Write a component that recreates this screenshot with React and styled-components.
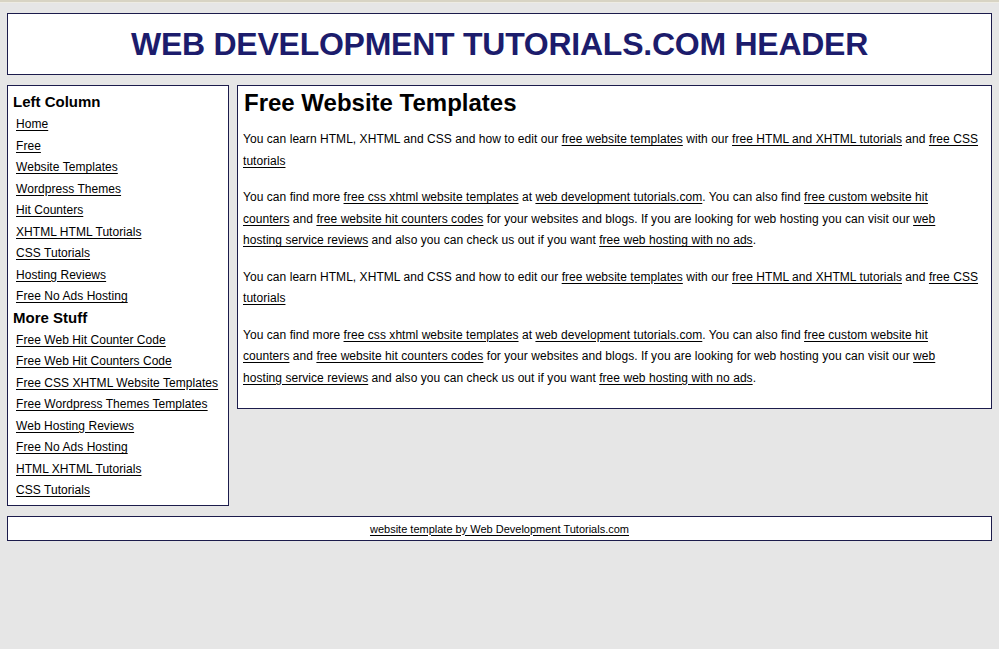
import React from "react";
import styled, { createGlobalStyle } from "styled-components";

const Global = createGlobalStyle`
  html, body { margin: 0; padding: 0; }
  body {
    background: #e6e6e6;
    font-family: "Liberation Sans", Arial, sans-serif;
    font-size: 12px;
    letter-spacing: 0.05px;
    color: #000;
  }
`;

const TopEdge = styled.div`
  height: 2px;
  background: #d8d4c4;
  border-bottom: 1px solid #eeece4;
`;

const Page = styled.div`
  padding: 10px 7px 0 7px;
  display: flex;
  flex-direction: column;
  gap: 10px;
`;

const Box = styled.div`
  background: #fff;
  border: 1px solid #1c1c4c;
`;

const Header = styled(Box)`
  height: 60px;
  display: flex;
  align-items: center;
  justify-content: center;
`;

const Title = styled.h1`
  margin: 0;
  font-size: 32px;
  font-weight: bold;
  color: #1c1c6c;
  letter-spacing: -0.25px;
`;

const Columns = styled.div`
  display: grid;
  grid-template-columns: 222px 1fr;
  gap: 8px;
  align-items: start;
`;

const Sidebar = styled(Box)`
  padding: 6px 5px 3px 5px;
`;

const SideHeading = styled.h3`
  margin: 0 0 2px 0;
  font-size: 15px;
  line-height: 20px;
  font-weight: bold;
  letter-spacing: 0;
`;

const SideLink = styled.a`
  display: block;
  padding-left: 3px;
  line-height: 21.5px;
  color: #000;
  text-decoration: underline;
  text-underline-offset: 2px;
  width: fit-content;
`;

const Main = styled(Box)`
  padding: 3px 5px 4px 5px;
`;

const MainHeading = styled.h2`
  margin: 0 0 12px 1px;
  font-size: 24px;
  line-height: 28px;
  font-weight: bold;
  letter-spacing: 0;
`;

const Para = styled.p`
  margin: 0 0 15px 0;
  line-height: 21.5px;
`;

const TextLink = styled.a`
  color: #000;
  text-decoration: underline;
  text-underline-offset: 2px;
`;

const Footer = styled(Box)`
  height: 22px;
  padding-top: 1px;
  display: flex;
  align-items: center;
  justify-content: center;
  font-size: 11px;
  letter-spacing: 0;
`;

const leftLinks = [
  "Home",
  "Free",
  "Website Templates",
  "Wordpress Themes",
  "Hit Counters",
  "XHTML HTML Tutorials",
  "CSS Tutorials",
  "Hosting Reviews",
  "Free No Ads Hosting",
];

const moreLinks = [
  "Free Web Hit Counter Code",
  "Free Web Hit Counters Code",
  "Free CSS XHTML Website Templates",
  "Free Wordpress Themes Templates",
  "Web Hosting Reviews",
  "Free No Ads Hosting",
  "HTML XHTML Tutorials",
  "CSS Tutorials",
];

const ParaOne = () => (
  <Para>
    You can learn HTML, XHTML and CSS and how to edit our{" "}
    <TextLink href="#">free website templates</TextLink> with our{" "}
    <TextLink href="#">free HTML and XHTML tutorials</TextLink> and{" "}
    <TextLink href="#">free CSS tutorials</TextLink>
  </Para>
);

const ParaTwo = () => (
  <Para>
    You can find more <TextLink href="#">free css xhtml website templates</TextLink> at{" "}
    <TextLink href="#">web development tutorials.com</TextLink>. You can also find{" "}
    <TextLink href="#">
      free custom website hit
      <br />
      counters
    </TextLink>{" "}
    and <TextLink href="#">free website hit counters codes</TextLink> for your websites and blogs.
    If you are looking for web hosting you can visit our{" "}
    <TextLink href="#">
      web
      <br />
      hosting service reviews
    </TextLink>{" "}
    and also you can check us out if you want{" "}
    <TextLink href="#">free web hosting with no ads</TextLink>.
  </Para>
);

export default function App() {
  return (
    <>
      <Global />
      <TopEdge />
      <Page>
        <Header>
          <Title>WEB DEVELOPMENT TUTORIALS.COM HEADER</Title>
        </Header>
        <Columns>
          <Sidebar>
            <SideHeading>Left Column</SideHeading>
            {leftLinks.map((l, i) => (
              <SideLink key={"a" + i} href="#">
                {l}
              </SideLink>
            ))}
            <SideHeading>More Stuff</SideHeading>
            {moreLinks.map((l, i) => (
              <SideLink key={"b" + i} href="#">
                {l}
              </SideLink>
            ))}
          </Sidebar>
          <Main>
            <MainHeading>Free Website Templates</MainHeading>
            <ParaOne />
            <ParaTwo />
            <ParaOne />
            <ParaTwo />
          </Main>
        </Columns>
        <Footer>
          <TextLink href="#">website template by Web Development Tutorials.com</TextLink>
        </Footer>
      </Page>
    </>
  );
}
